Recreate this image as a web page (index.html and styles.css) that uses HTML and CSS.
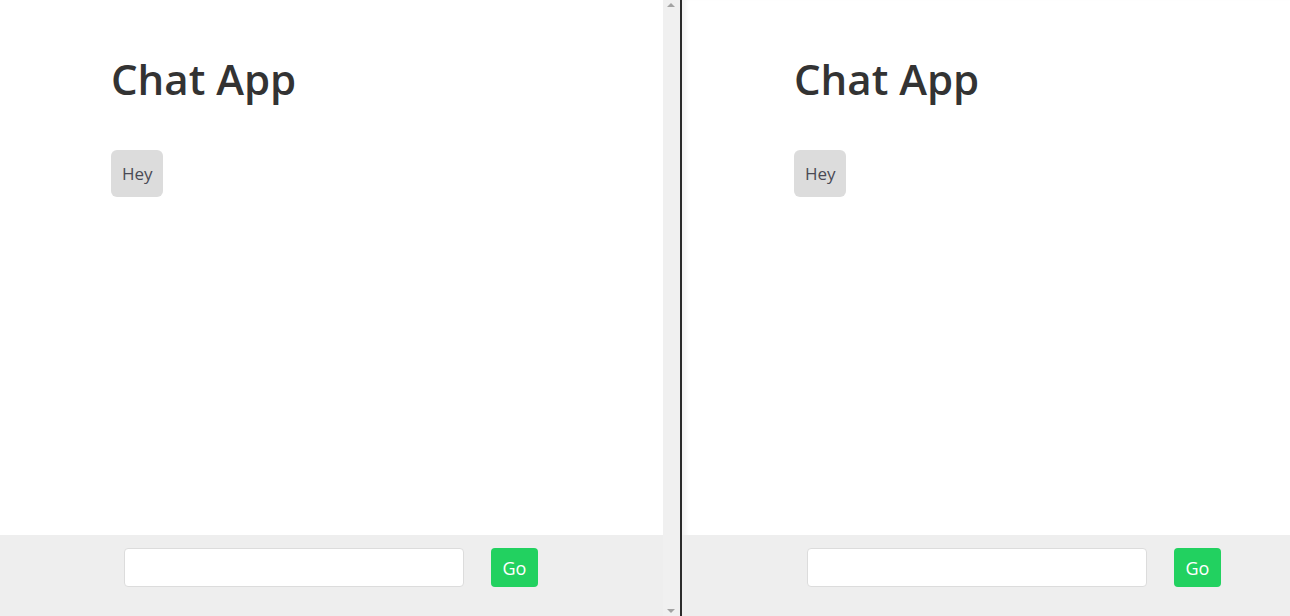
FILE: index.html
```html
<!DOCTYPE html>
<html>
<head>
<meta charset="utf-8">
<title>Chat App</title>
<link rel="stylesheet" href="styles.css">
</head>
<body>
<div class="screen">
  <section class="pane pane-left">
    <main class="chat">
      <h1 class="title">Chat App</h1>
      <div class="messages">
        <div class="bubble">Hey</div>
      </div>
    </main>
    <form class="composer">
      <input class="composer-input" type="text">
      <button class="composer-send" type="button">Go</button>
    </form>
  </section>
  <div class="scrollbar">
    <span class="arrow arrow-up"></span>
    <span class="arrow arrow-down"></span>
  </div>
  <div class="divider"></div>
  <section class="pane pane-right">
    <main class="chat">
      <h1 class="title">Chat App</h1>
      <div class="messages">
        <div class="bubble">Hey</div>
      </div>
    </main>
    <form class="composer">
      <input class="composer-input" type="text">
      <button class="composer-send" type="button">Go</button>
    </form>
  </section>
</div>
</body>
</html>
```
FILE: styles.css
```css
html, body {
  margin: 0;
  padding: 0;
  height: 100%;
  overflow: hidden;
}
body {
  font-family: "Open Sans", "Noto Sans", sans-serif;
  background: #fff;
}
.screen {
  display: flex;
  height: 616px;
  width: 1290px;
}
.pane {
  display: flex;
  flex-direction: column;
  background: #fff;
}
.pane-left {
  width: 663px;
  flex: none;
}
.pane-right {
  flex: 1;
  box-shadow: inset 6px 0 4px -2px rgba(0, 0, 0, 0.05);
}
.chat {
  flex: 1;
  padding: 0 0 0 111px;
}
.pane-right .chat {
  padding-left: 112px;
}
.title {
  margin: 52px 0 0 0;
  font-size: 42px;
  font-weight: 600;
  color: #333;
  line-height: 54px;
}
.messages {
  margin-top: 44px;
  display: flex;
  flex-direction: column;
  align-items: flex-start;
}
.bubble {
  background: #dcdcdc;
  border-radius: 6px;
  color: #4a4a55;
  font-size: 17px;
  line-height: 23px;
  padding: 12px 10px 12px 11px;
}
.composer {
  height: 81px;
  flex: none;
  background: #eeeeee;
  margin: 0;
  display: flex;
  align-items: flex-start;
  padding: 13px 0 0 124px;
  box-sizing: border-box;
}
.pane-right .composer {
  padding-left: 125px;
}
.composer-input {
  width: 340px;
  height: 39px;
  box-sizing: border-box;
  border: 1px solid #dcdcdc;
  border-radius: 4px;
  background: #fff;
  margin: 0;
  padding: 0 10px;
  font-family: inherit;
}
.composer-send {
  margin-left: 27px;
  width: 47px;
  height: 39px;
  border: none;
  border-radius: 4px;
  background: #22d160;
  color: #fff;
  font-family: inherit;
  font-size: 18px;
  padding: 0;
}
.scrollbar {
  width: 17px;
  flex: none;
  background: #f0f0f0;
  position: relative;
}
.arrow {
  position: absolute;
  left: 4px;
  width: 0;
  height: 0;
  border-left: 4px solid transparent;
  border-right: 4px solid transparent;
}
.arrow-up {
  top: 3px;
  border-bottom: 4px solid #a3a3a3;
}
.arrow-down {
  bottom: 3px;
  border-top: 4px solid #a3a3a3;
}
.divider {
  width: 2px;
  flex: none;
  background: #2b2b2b;
}
```
